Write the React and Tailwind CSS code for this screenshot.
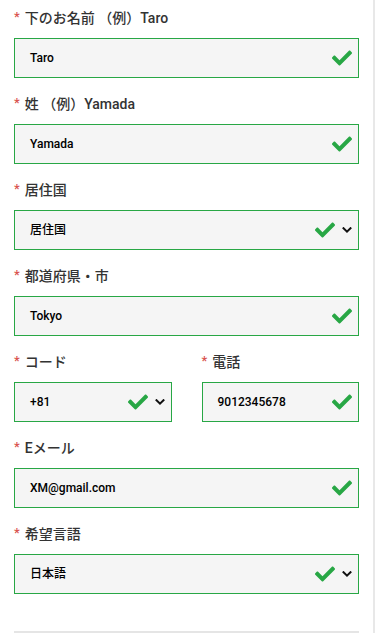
import React from "react";

const font = { fontFamily: '"Roboto", "Noto Sans CJK JP", sans-serif' };

function Check() {
  return (
    <svg viewBox="0 0 512 512" className="w-[20px] h-[20px] text-[#28a745]" fill="currentColor">
      <path d="M173.898 439.404l-166.4-166.4c-9.997-9.997-9.997-26.206 0-36.204l36.203-36.204c9.997-9.998 26.207-9.998 36.204 0L192 312.69 432.095 72.596c9.997-9.997 26.207-9.997 36.204 0l36.203 36.204c9.997 9.997 9.997 26.206 0 36.204l-294.4 294.401c-9.998 9.997-26.207 9.997-36.204-.001z" />
    </svg>
  );
}

function Chevron() {
  return (
    <svg viewBox="0 0 10 6" className="w-[10px] h-[6px]" fill="none" stroke="#111" strokeWidth="2" strokeLinecap="square">
      <path d="M1.5 1.2 L5 4.6 L8.5 1.2" />
    </svg>
  );
}

function Label({ children }) {
  return (
    <div className="flex items-center h-5 mb-[10px] text-[14px] font-medium text-[#333]">
      <span className="text-[#d9534f] text-[13px] mr-[5px] -mt-[4px] leading-none">*</span>
      <span>{children}</span>
    </div>
  );
}

function Field({ value, select }) {
  return (
    <div className="h-10 border border-[#28a745] bg-[#f5f5f5] flex items-center pl-[15px] pr-[6px]">
      <span className="flex-1 text-[12px] font-medium text-black">{value}</span>
      <Check />
      {select && (
        <span className="ml-[7px]">
          <Chevron />
        </span>
      )}
    </div>
  );
}

export default function App() {
  return (
    <div className="w-[375px] h-[633px] bg-white overflow-hidden border-r-2 border-[#e8e8e8]" style={font}>
      <div className="px-[14px] pt-2 flex flex-col gap-4">
        <div>
          <Label>下のお名前 （例）Taro</Label>
          <Field value="Taro" />
        </div>
        <div>
          <Label>姓 （例）Yamada</Label>
          <Field value="Yamada" />
        </div>
        <div>
          <Label>居住国</Label>
          <Field value="居住国" select />
        </div>
        <div>
          <Label>都道府県・市</Label>
          <Field value="Tokyo" />
        </div>
        <div className="grid grid-cols-2 gap-[30px]">
          <div>
            <Label>コード</Label>
            <Field value="+81" select />
          </div>
          <div>
            <Label>電話</Label>
            <Field value="9012345678" />
          </div>
        </div>
        <div>
          <Label>Eメール</Label>
          <Field value="XM@gmail.com" />
        </div>
        <div>
          <Label>希望言語</Label>
          <Field value="日本語" select />
        </div>
        <div className="mt-[21px] border-t-2 border-[#e5e5e5]" />
      </div>
    </div>
  );
}
